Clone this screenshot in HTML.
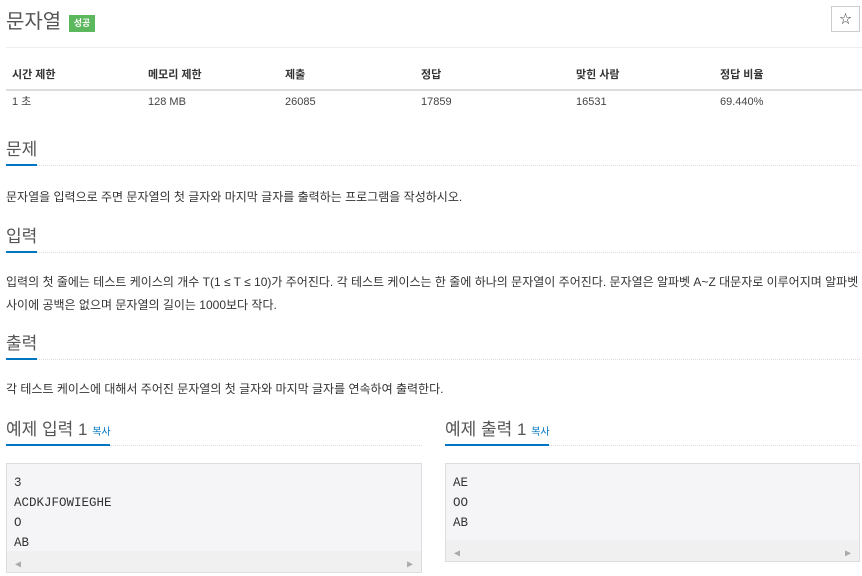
<!DOCTYPE html>
<html><head><meta charset="utf-8"><style>
*{margin:0;padding:0;box-sizing:border-box}
body{width:862px;height:570px;overflow:hidden;background:#fff;font-family:"Liberation Sans","Noto Sans CJK KR",sans-serif;color:#333;position:relative}
.a{position:absolute;white-space:nowrap}
.t{font-size:20px;color:#555;left:6px;top:8px;line-height:28px}
.badge{left:69px;top:15px;width:26px;height:17px;background:#5cb85c;color:#fff;font-size:9px;font-weight:bold;text-align:center;line-height:17px}
.star{left:831px;top:6px;width:29px;height:26px;border:1px solid #ccc;text-align:center;line-height:24px;font-size:12px;color:#333}
.hr{left:6px;width:856px;height:1px;background:#eee}
.th{font-size:11px;font-weight:bold;top:67px;line-height:16px}
.td{font-size:11px;top:94px;color:#444;line-height:16px}
.h{font-size:17px;color:#555;line-height:24px}
.ul{height:2px;background:#0076c0}
.dot{height:0;border-top:1px dotted #ddd}
.p{font-size:12px;color:#333;line-height:23px}
.box{background:#f5f5f7;border:1px solid #ddd;font-family:"Liberation Mono","DejaVu Sans Mono",monospace;font-size:12.5px;color:#333;line-height:20px;padding:9px 7px}
.sb{position:absolute;left:0;right:0;bottom:0;height:21px;background:#f0f0f0}
.sb span{position:absolute;top:5px;font-size:10px;color:#aaa}
.copy{font-size:10px;color:#0076c0}
</style></head><body>
<div class="a t">문자열</div>
<div class="a badge">성공</div>
<div class="a star">☆</div>
<div class="a hr" style="top:47px"></div>
<div class="a th" style="left:12px">시간 제한</div>
<div class="a th" style="left:148px">메모리 제한</div>
<div class="a th" style="left:285px">제출</div>
<div class="a th" style="left:421px">정답</div>
<div class="a th" style="left:576px">맞힌 사람</div>
<div class="a th" style="left:720px">정답 비율</div>
<div class="a" style="left:6px;top:89px;width:856px;height:2px;background:#ddd"></div>
<div class="a td" style="left:12px">1 초</div>
<div class="a td" style="left:148px">128 MB</div>
<div class="a td" style="left:285px">26085</div>
<div class="a td" style="left:421px">17859</div>
<div class="a td" style="left:576px">16531</div>
<div class="a td" style="left:720px">69.440%</div>

<div class="a h" style="left:6px;top:138px">문제</div>
<div class="a dot" style="left:37px;top:165px;width:823px"></div>
<div class="a ul" style="left:6px;top:164px;width:31px"></div>
<div class="a p" style="left:6px;top:186px">문자열을 입력으로 주면 문자열의 첫 글자와 마지막 글자를 출력하는 프로그램을 작성하시오.</div>

<div class="a h" style="left:6px;top:225px">입력</div>
<div class="a dot" style="left:37px;top:252px;width:823px"></div>
<div class="a ul" style="left:6px;top:251px;width:31px"></div>
<div class="a p" style="left:6px;top:271px">입력의 첫 줄에는 테스트 케이스의 개수 T(1 ≤ T ≤ 10)가 주어진다. 각 테스트 케이스는 한 줄에 하나의 문자열이 주어진다. 문자열은 알파벳 A~Z 대문자로 이루어지며 알파벳<br>사이에 공백은 없으며 문자열의 길이는 1000보다 작다.</div>

<div class="a h" style="left:6px;top:332px">출력</div>
<div class="a dot" style="left:37px;top:359px;width:823px"></div>
<div class="a ul" style="left:6px;top:358px;width:31px"></div>
<div class="a p" style="left:6px;top:378px">각 테스트 케이스에 대해서 주어진 문자열의 첫 글자와 마지막 글자를 연속하여 출력한다.</div>

<div class="a h" style="left:6px;top:418px">예제 입력 1 <span class="copy">복사</span></div>
<div class="a dot" style="left:110px;top:445px;width:312px"></div>
<div class="a ul" style="left:6px;top:444px;width:104px"></div>
<div class="a box" style="left:6px;top:463px;width:416px;height:110px">3<br>ACDKJFOWIEGHE<br>O<br>AB<div class="sb"><span style="left:8px">◀</span><span style="right:8px">▶</span></div></div>

<div class="a h" style="left:445px;top:418px">예제 출력 1 <span class="copy">복사</span></div>
<div class="a dot" style="left:549px;top:445px;width:311px"></div>
<div class="a ul" style="left:445px;top:444px;width:104px"></div>
<div class="a box" style="left:445px;top:463px;width:415px;height:99px">AE<br>OO<br>AB<div class="sb"><span style="left:8px">◀</span><span style="right:8px">▶</span></div></div>
</body></html>
